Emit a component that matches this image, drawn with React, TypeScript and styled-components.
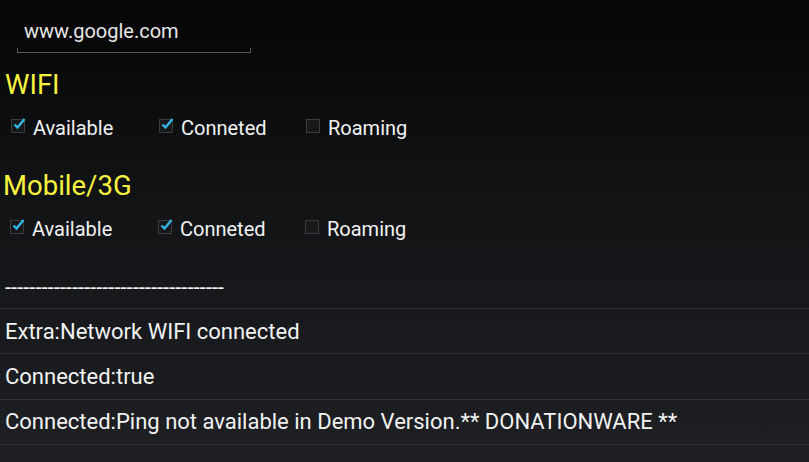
import styled, { createGlobalStyle } from 'styled-components';

const GlobalStyle = createGlobalStyle`
  html, body {
    margin: 0;
    padding: 0;
  }
  body {
    background: #050505;
    font-family: Roboto, "Liberation Sans", sans-serif;
  }
`;

type CheckItem = { label: string; checked: boolean };

const sections: { title: string; offset: number; items: CheckItem[] }[] = [
  {
    title: 'WIFI',
    offset: 11,
    items: [
      { label: 'Available', checked: true },
      { label: 'Conneted', checked: true },
      { label: 'Roaming', checked: false },
    ],
  },
  {
    title: 'Mobile/3G',
    offset: 10,
    items: [
      { label: 'Available', checked: true },
      { label: 'Conneted', checked: true },
      { label: 'Roaming', checked: false },
    ],
  },
];

const results = [
  'Extra:Network WIFI connected',
  'Connected:true',
  'Connected:Ping not available in Demo Version.** DONATIONWARE **',
];

function Check({ checked }: { checked: boolean }) {
  return (
    <StBox>
      {checked && (
        <svg width="14" height="14" viewBox="0 0 14 14">
          <path d="M2.5 7.5 L5.5 10.5 L12.5 2" fill="none" stroke="#33b5e5" strokeWidth="2.4" />
        </svg>
      )}
    </StBox>
  );
}

export default function App() {
  return (
    <>
      <GlobalStyle />
      <StPage>
        <StUrlField>
          <StUrlText>www.google.com</StUrlText>
        </StUrlField>
        {sections.map((section, i) => (
          <StSection key={section.title} first={i === 0}>
            <StTitle indent={i === 0 ? 5 : 3}>{section.title}</StTitle>
            <StCheckRow offset={section.offset}>
              {section.items.map((item) => (
                <StCheckItem key={item.label}>
                  <Check checked={item.checked} />
                  <span>{item.label}</span>
                </StCheckItem>
              ))}
            </StCheckRow>
          </StSection>
        ))}
        <StDashes>{'-'.repeat(36)}</StDashes>
        <StList>
          {results.map((line) => (
            <StListRow key={line}>{line}</StListRow>
          ))}
          <StListRow />
        </StList>
      </StPage>
    </>
  );
}

const StPage = styled.main`
  display: flex;
  flex-direction: column;
  width: 809px;
  height: 462px;
  overflow: hidden;
  background: linear-gradient(to bottom, #050505 0%, #121416 45%, #1e2024 100%);
  color: #f2f2f2;
  & > * {
    flex-shrink: 0;
  }
`;

const StUrlField = styled.div`
  position: relative;
  width: 234px;
  height: 53px;
  margin-left: 17px;
  border-bottom: 1px solid #55585c;
  box-sizing: border-box;
  padding: 19px 0 0 7px;
  &::before,
  &::after {
    content: '';
    position: absolute;
    bottom: 0;
    width: 1px;
    height: 4px;
    background: #55585c;
  }
  &::before {
    left: 0;
  }
  &::after {
    right: 0;
  }
`;

const StUrlText = styled.span`
  display: block;
  font-size: 20px;
  line-height: 24px;
  color: #e6e6e6;
`;

const StSection = styled.section<{ first: boolean }>`
  display: flex;
  flex-direction: column;
  margin-top: ${({ first }) => (first ? '16px' : '30px')};
`;

const StTitle = styled.h2<{ indent: number }>`
  margin: 0;
  padding-left: ${({ indent }) => indent}px;
  font-size: 27.5px;
  font-weight: 400;
  line-height: 32px;
  color: #f7f23f;
`;

const StCheckRow = styled.div<{ offset: number }>`
  display: grid;
  grid-template-columns: 148px 147px 148px;
  padding-left: ${({ offset }) => offset}px;
  margin-top: 15px;
`;

const StCheckItem = styled.label`
  display: flex;
  align-items: center;
  gap: 8px;
  font-size: 20px;
  line-height: 24px;
  color: #f2f2f2;
`;

const StBox = styled.span`
  position: relative;
  display: flex;
  align-items: center;
  justify-content: center;
  width: 12px;
  height: 12px;
  margin-top: -4px;
  border: 1px solid #3a3d40;
  background: #16181a;
  & > svg {
    position: absolute;
    left: 0;
    top: -3px;
  }
`;

const StDashes = styled.div`
  margin-top: 35px;
  padding-left: 5px;
  font-size: 22px;
  line-height: 24px;
  color: #f2f2f2;
`;

const StList = styled.div`
  display: flex;
  flex-direction: column;
  margin-top: 8px;
`;

const StListRow = styled.div`
  height: 45.3px;
  box-sizing: border-box;
  border-top: 1px solid #2e3034;
  padding-left: 5px;
  display: flex;
  align-items: center;
  font-size: 22px;
  color: #f2f2f2;
  white-space: nowrap;
`;
